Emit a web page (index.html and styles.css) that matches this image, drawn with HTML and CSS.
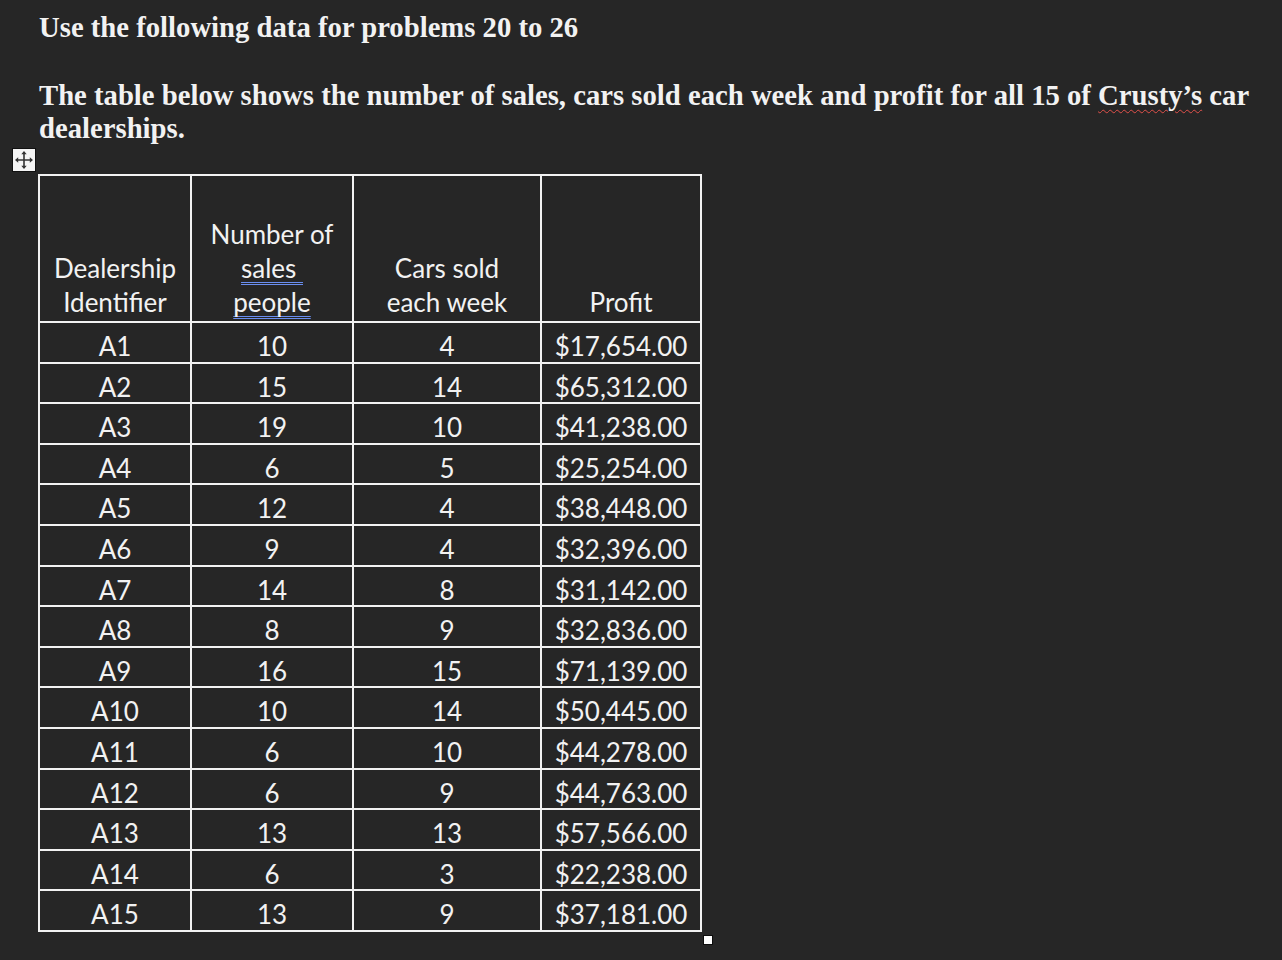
FILE: index.html
```html
<!DOCTYPE html>
<html>
<head>
<meta charset="utf-8">
<link rel="stylesheet" href="styles.css">
</head>
<body>
<div class="doc">
  <p class="line1">Use the following data for problems 20 to 26</p>
  <p class="line2">The table below shows the number of sales, cars sold each week and profit for all 15 of <span class="spell">Crusty’s</span> car dealerships.</p>
  <div class="table-wrap">
    <div class="move-handle">
      <svg width="20" height="20" viewBox="0 0 20 20">
        <path d="M10 2 L10 18 M2 10 L18 10" stroke="#333" stroke-width="1.6" fill="none"/>
        <path d="M10 1 L7.3 4.2 L12.7 4.2 Z M10 19 L7.3 15.8 L12.7 15.8 Z M1 10 L4.2 7.3 L4.2 12.7 Z M19 10 L15.8 7.3 L15.8 12.7 Z" fill="#333"/>
      </svg>
    </div>
    <table class="data">
      <colgroup>
        <col class="c1"><col class="c2"><col class="c3"><col class="c4">
      </colgroup>
      <thead>
        <tr>
          <th>Dealership<br>Identifier</th>
          <th>Number of<br><span class="gram">sales&nbsp;</span><br><span class="gram">people</span></th>
          <th>Cars sold<br>each week</th>
          <th>Profit</th>
        </tr>
      </thead>
      <tbody>
        <tr><td>A1</td><td>10</td><td>4</td><td>$17,654.00</td></tr>
        <tr><td>A2</td><td>15</td><td>14</td><td>$65,312.00</td></tr>
        <tr><td>A3</td><td>19</td><td>10</td><td>$41,238.00</td></tr>
        <tr><td>A4</td><td>6</td><td>5</td><td>$25,254.00</td></tr>
        <tr><td>A5</td><td>12</td><td>4</td><td>$38,448.00</td></tr>
        <tr><td>A6</td><td>9</td><td>4</td><td>$32,396.00</td></tr>
        <tr><td>A7</td><td>14</td><td>8</td><td>$31,142.00</td></tr>
        <tr><td>A8</td><td>8</td><td>9</td><td>$32,836.00</td></tr>
        <tr><td>A9</td><td>16</td><td>15</td><td>$71,139.00</td></tr>
        <tr><td>A10</td><td>10</td><td>14</td><td>$50,445.00</td></tr>
        <tr><td>A11</td><td>6</td><td>10</td><td>$44,278.00</td></tr>
        <tr><td>A12</td><td>6</td><td>9</td><td>$44,763.00</td></tr>
        <tr><td>A13</td><td>13</td><td>13</td><td>$57,566.00</td></tr>
        <tr><td>A14</td><td>6</td><td>3</td><td>$22,238.00</td></tr>
        <tr><td>A15</td><td>13</td><td>9</td><td>$37,181.00</td></tr>
      </tbody>
    </table>
    <div class="resize-handle"></div>
  </div>
</div>
</body>
</html>
```

FILE: styles.css
```css
html, body {
  margin: 0;
  padding: 0;
  background: #262626;
}

.doc {
  padding: 11px 20px 10px 39px;
  color: #f2f2f2;
  font-family: "Liberation Serif", "Times New Roman", serif;
  font-weight: bold;
  font-size: 28.7px;
  line-height: 33px;
}

.doc p {
  margin: 0;
}

.line2 {
  margin-top: 35px !important;
}

.spell {
  text-decoration: underline wavy #e0504a;
  text-decoration-thickness: 1px;
  text-underline-offset: 4px;
}

.table-wrap {
  position: relative;
  margin-top: 29px;
  margin-left: -1px;
  width: 662px;
}

.move-handle {
  position: absolute;
  left: -26px;
  top: -26px;
  width: 22px;
  height: 22px;
  background: #f4f4f4;
  border: 1px solid #111;
  display: flex;
  align-items: center;
  justify-content: center;
}

.resize-handle {
  margin-top: 3px;
  margin-left: 665px;
  width: 8px;
  height: 8px;
  background: #ffffff;
  border: 1px solid #0d0d0d;
}

.data {
  border-collapse: collapse;
  width: 662px;
  table-layout: fixed;
  font-family: Lato, "Open Sans", sans-serif;
  font-weight: normal;
  font-size: 26px;
  color: #f2f2f2;
}

.c1 { width: 152px; }
.c2 { width: 162px; }
.c3 { width: 188px; }
.c4 { width: 160px; }

.data th,
.data td {
  border: 2px solid #f2f2f2;
  text-align: center;
  padding: 0;
}

.data thead tr {
  height: 147px;
}

.data th {
  font-weight: normal;
  vertical-align: bottom;
  line-height: 34px;
  padding-bottom: 2px;
}

.data tbody tr {
  height: 40.6px;
}

.data td {
  line-height: 30px;
  padding-top: 8px;
  vertical-align: top;
}

.gram {
  text-decoration: underline double #6a8ef0;
  text-decoration-thickness: 1px;
  text-underline-offset: 4px;
  text-decoration-skip-ink: none;
}
```
